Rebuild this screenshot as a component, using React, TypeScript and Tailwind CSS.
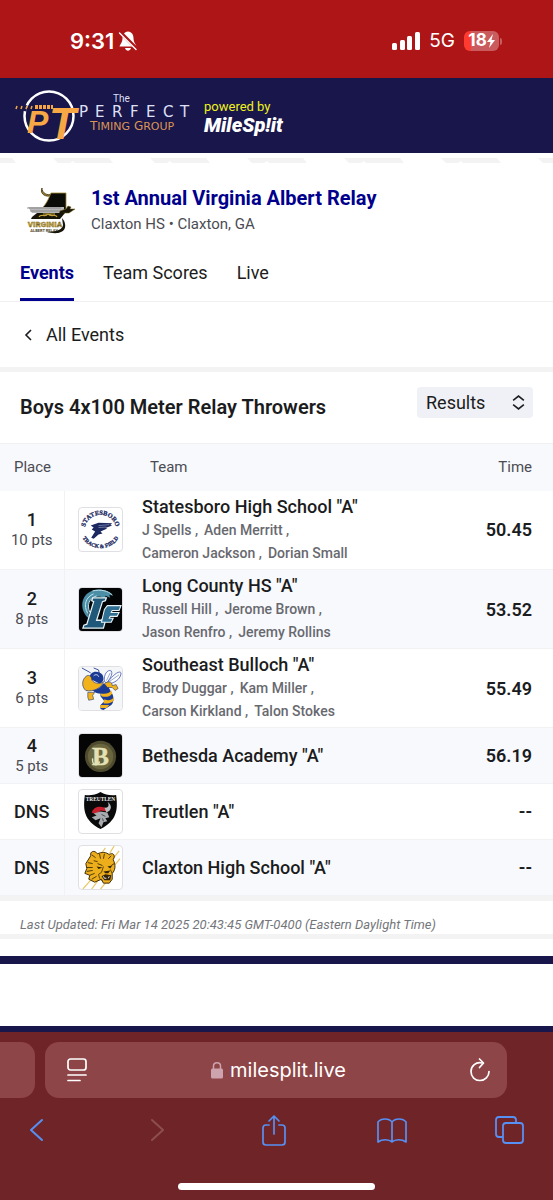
import React, { useState } from 'react';

interface Result {
  place: string;
  points?: string;
  team: string;
  athletes?: string[][];
  time: string;
  logo: React.ReactNode;
}

/* ---------- team logos ---------- */

const StatesboroLogo = () => (
  <svg viewBox="0 0 44 44" className="h-full w-full" aria-hidden="true">
    <defs>
      <path id="arcTop" d="M6 22 A 16 15 0 0 1 38 22" />
      <path id="arcBottom" d="M1 21 A 21 20 0 0 0 43 21" />
    </defs>
    <g fill="#1c2860" stroke="#1c2860" strokeWidth="0.300" fontFamily="Liberation Serif" fontWeight="700" fontSize="6.500" textAnchor="middle">
      <text>
        <textPath href="#arcTop" startOffset="50%">STATESBORO</textPath>
      </text>
      <text fontSize="5.500">
        <textPath href="#arcBottom" startOffset="50%">TRACK &amp; FIELD</textPath>
      </text>
    </g>
    <path d="M12 18 L20 15 L34 15.500 L32 17.500 L34 18 L27 20.500 L29 21 L22 24 L24 26 L20 27 L15 31.500 L12.500 30.500 L16.500 24 L13 22 L15 20 Z" fill="#1c2860" />
    <path d="M20 18 L31 17 M20 20 L28 19.500" stroke="#aab1d0" strokeWidth="0.600" />
  </svg>
);

const LongCountyLogo = () => (
  <svg viewBox="0 0 44 44" className="h-full w-full" aria-hidden="true">
    <rect width="44" height="44" fill="#020406" />
    <path d="M10 31 C1 24 1 9 11 4 C18 0 29 1 35 8 L31 7 L32 10 L27 8 L27 11 L22 9 C13 8 8 13 10 22 Z" fill="#4c8ea6" />
    <path d="M9 26 C4 18 7 9 15 6 M11 25 C8 17 10 11 18 8 M14 3 C22 1 30 3 34 7" stroke="#c4e5ec" strokeWidth="1" fill="none" />
    <path d="M14 10 H28 L27 13 L24 14 L18 33 H23 L26 29 L28 30 L25 41 H4 L5 38 L8 37 L15 14 L13 13 Z" fill="#1f5878" stroke="#e8f3f6" strokeWidth="1.300" />
    <path d="M29 18 H43 L41 23 H34 L33 25 H41 L39 29 H32 L31 31 H35 L33 35 H23 L26 22 Z" fill="#2f6f92" stroke="#e8f3f6" strokeWidth="1.100" />
  </svg>
);

const HornetLogo = () => (
  <svg viewBox="0 0 44 44" className="h-full w-full" aria-hidden="true">
    <rect width="44" height="44" fill="#f5f6f8" />
    <path d="M26 15 C25 8 29 2 33 4 C35 8 31 12 29 16 C34 9 41 3 43 6 C43 12 36 17 30 17 Z" fill="#fff" stroke="#5269b4" strokeWidth="0.900" />
    <path d="M28 14 L32 6 M31 15 L41 8" stroke="#5269b4" strokeWidth="0.600" />
    <path d="M3 1 L12 6 M15 1 L20 3 L21 8" stroke="#243f92" strokeWidth="0.900" fill="none" />
    <path d="M11 12 C10 4 20 3 24 8 C26 12 25 16 21 17 Z" fill="#1b3a93" />
    <path d="M8 9 C2 13 3 21 7 24 C14 26 24 21 25 15 C22 18 15 17 13 13 C13 9 10 8 8 9 Z" fill="#f2b21c" stroke="#29396f" strokeWidth="0.700" />
    <path d="M15 9 C17 7 20 8 20 10" stroke="#fff" strokeWidth="0.800" fill="none" />
    <path d="M14 24 C20 23 23 20 25 17 L31 20 L30 26 C24 28 18 28 14 24 Z" fill="#1b3a93" />
    <path d="M26 17 C30 14 34 15 34 19 L38 18 L40 22 L37 24 L34 21 L29 21 Z" fill="#f2b21c" stroke="#29396f" strokeWidth="0.600" />
    <path d="M9 26 L16 26 L14 29 L15 33 L10 34 L9 31 Z" fill="#f2b21c" stroke="#29396f" strokeWidth="0.600" />
    <path d="M22 25 L31 22 L33 26 C36 29 36 36 33 39 L25 44 L22 43 L22 39 L26 35 L22 30 Z" fill="#1b3a93" />
    <path d="M22 27 C27 28 31 27 33 24 L34 27 C31 31 27 31 23 30 Z M26 33 C30 35 33 34 36 31 L35 35 C32 37 28 38 25 37 Z M22 39 L31 39 L28 42 L22 42 Z" fill="#f2b21c" />
  </svg>
);

const BethesdaLogo = () => (
  <svg viewBox="0 0 44 44" className="h-full w-full" aria-hidden="true">
    <rect width="44" height="44" fill="#050505" />
    <circle cx="22" cy="23" r="16" fill="#4e4b2f" />
    <circle cx="22" cy="23" r="13" fill="#68653f" />
    <text x="22" y="32" textAnchor="middle" fontFamily="Liberation Serif" fontWeight="700" fontSize="26" fill="#e4e0b4" stroke="#e4e0b4" strokeWidth="0.400">B</text>
    <path d="M14 25 C13 33 20 33 21 28" stroke="#e4e0b4" strokeWidth="1.500" fill="none" />
  </svg>
);

const TreutlenLogo = () => (
  <svg viewBox="0 0 44 44" className="h-full w-full" aria-hidden="true">
    <path d="M22 2 C27 5 33 6 38 5 C40 20 39 31 22 40 C5 31 4 20 6 5 C11 6 17 5 22 2 Z" fill="#0a0a0a" />
    <text x="22" y="11" textAnchor="middle" fontFamily="Liberation Serif" fontWeight="700" fontSize="5.500" fill="#f2f2f2">TREUTLEN</text>
    <path d="M13 23 C15 17 21 16 26 18 L29 22 L22 21 L18 25 Z" fill="#c9202f" />
    <path d="M26 18 C31 19 31 14 29 12 C34 15 34 21 28 23 Z" fill="#b9bcc0" />
    <path d="M15 24 L22 22 L29 23 L31 28 L27 29 L29 32 L25 33 L23 38 L20 34 L22 29 L17 31 L13 28 L18 26 Z" fill="#a7aaaf" />
    <path d="M23 25 L27 27 M24 29 L25 32" stroke="#333" strokeWidth="0.800" />
  </svg>
);

const TigerLogo = () => (
  <svg viewBox="0 0 44 44" className="h-full w-full" aria-hidden="true">
    <path d="M22 9 L27 2 M31 8 L36 0 M35 13 L41 5 M37 19 L42 13 M4 44 L12 35 M13 44 L19 36 M22 44 L27 38" stroke="#e8c762" strokeWidth="1.200" />
    <path d="M12 10 C11 5 16 4 19 8 C23 6 28 6 31 9 C34 6 38 9 35 14 C38 20 37 25 34 28 L34 34 L31 38 L25 38 L23 34 L16 37 L10 34 L11 30 L6 28 L8 23 L7 18 Z" fill="#ecae1a" stroke="#3d2c0a" strokeWidth="1" />
    <path d="M13 9 L17 12 M21 8 L22 13 M26 8 L25 13 M33 10 L30 13 M9 17 L14 18 M8 22 L14 22 M8 26 L14 25 M11 30 L16 28 M13 34 L18 31 M15 15 L19 16 M36 18 L33 20 M19 18 L24 20" stroke="#3d2c0a" strokeWidth="0.900" fill="none" />
    <path d="M18 21 L24 22 L20 23.500 Z M29 21 L34 20 L32 23 Z M25 26 L32 25 L30 28 L27 28 Z M23 31 L27 29 L33 30 L32 35 L26 35 Z" fill="#33240a" />
    <path d="M25 21 L23 27 L20 29 L21 33 L24 36 M32 24 L34 28" stroke="#3d2c0a" strokeWidth="0.800" fill="none" />
    <path d="M25 31 L26 33 L28 33 M31 31 L30 33" stroke="#fff" strokeWidth="0.900" fill="none" />
  </svg>
);

const MeetLogo = () => (
  <svg viewBox="0 0 48 48" className="size-12 shrink-0" aria-hidden="true">
    <path d="M25 8 C20 10 15 7 15 2 C13 6 16 11 23 10" fill="#9d8429" stroke="#3b3010" strokeWidth="0.800" />
    <path d="M24 7 H39 V24 H13 C19 19 21 14 24 7 Z" fill="#0b0b08" stroke="#a58b2e" strokeWidth="0.800" />
    <path d="M1 21 H37 V27 H5 Z" fill="#b8b8b8" />
    <path d="M0 22 H34 M3 25 H36" stroke="#808080" strokeWidth="0.800" />
    <path d="M33 25 L39 23 L41 20 L44 21 L43 23 L48 23 L42 27 L36 27 L31 31 Z" fill="#171408" stroke="#76611b" strokeWidth="0.500" />
    <path d="M5 31 L10 27 L38 27 L33 33 H4 Z" fill="#171408" />
    <path d="M12 31 C14 27 18 32 21 28 C25 32 28 27 30 31 M16 28 H28" stroke="#c6a43b" strokeWidth="1.200" fill="none" />
    <text x="18" y="41" textAnchor="middle" fontFamily="Roboto" fontWeight="900" fontSize="8" fill="#c6a43b" stroke="#6d581c" strokeWidth="0.300">VIRGINIA</text>
    <text x="17" y="46" textAnchor="middle" fontFamily="Roboto" fontWeight="700" fontSize="4" fill="#4d4325">ALBERT RELAY</text>
    <path d="M35 32 C39 36 40 44 34 46 C30 48 24 47 20 46 C30 46 36 43 36 39 Z" fill="#171408" />
  </svg>
);

const results: Result[] = [
  {
    place: '1',
    points: '10 pts',
    team: 'Statesboro High School "A"',
    athletes: [['J Spells', 'Aden Merritt'], ['Cameron Jackson', 'Dorian Small']],
    time: '50.45',
    logo: <StatesboroLogo />,
  },
  {
    place: '2',
    points: '8 pts',
    team: 'Long County HS "A"',
    athletes: [['Russell Hill', 'Jerome Brown'], ['Jason Renfro', 'Jeremy Rollins']],
    time: '53.52',
    logo: <LongCountyLogo />,
  },
  {
    place: '3',
    points: '6 pts',
    team: 'Southeast Bulloch "A"',
    athletes: [['Brody Duggar', 'Kam Miller'], ['Carson Kirkland', 'Talon Stokes']],
    time: '55.49',
    logo: <HornetLogo />,
  },
  { place: '4', points: '5 pts', team: 'Bethesda Academy "A"', time: '56.19', logo: <BethesdaLogo /> },
  { place: 'DNS', team: 'Treutlen "A"', time: '--', logo: <TreutlenLogo /> },
  { place: 'DNS', team: 'Claxton High School "A"', time: '--', logo: <TigerLogo /> },
];

/* ---------- phone status bar ---------- */

const StatusBar = () => (
  <div className="flex h-[78px] items-center justify-between bg-[#ad1517] pr-[51px] pl-[70px] pt-1 font-['Inter'] text-white">
    <div className="flex items-center gap-1">
      <span className="text-[22px] font-semibold">9:31</span>
      <svg viewBox="0 0 20 20" className="size-5" aria-hidden="true">
        <path d="M10 0.500 C6 1 4.500 4 4.500 7 C4.500 11 3 12 1.500 15.500 H18.500 C17 12 15.500 11 15.500 7 C15.500 4 14 1 10 0.500 Z M7 17 H13 C12 20.500 8 20.500 7 17 Z" fill="#fff" />
        <path d="M2 1 L19 18" stroke="#ad1517" strokeWidth="3.500" />
        <path d="M1.500 2 L18 18.500" stroke="#fff" strokeWidth="1.400" strokeLinecap="round" />
      </svg>
    </div>
    <div className="flex items-center gap-[9px]">
      <svg viewBox="0 0 28 18" className="h-[18px] w-7" fill="#fff" aria-hidden="true">
        <rect x="0" y="11" width="5" height="7" rx="1.500" />
        <rect x="8" y="8" width="5" height="10" rx="1.500" />
        <rect x="15" y="4" width="5" height="14" rx="1.500" />
        <rect x="23" y="0" width="5" height="18" rx="1.500" />
      </svg>
      <span className="text-[19px]">5G</span>
      <div className="flex items-center">
        <div className="flex h-5 w-[35px] items-center justify-center rounded-md bg-linear-to-r from-[#ff3b30] from-20% to-[#c95c5e] to-20% text-[17px] font-bold">
          18
          <svg viewBox="0 0 8 14" className="h-[14px] w-2" fill="#fff" aria-hidden="true">
            <path d="M6 0 L0 8 H3.500 L2 14 L8 6 H4.500 Z" />
          </svg>
        </div>
        <span className="ml-px h-[7px] w-[2px] rounded-r bg-[#c95c5e]" />
      </div>
    </div>
  </div>
);

/* ---------- sponsor header ---------- */

const BrandHeader = () => (
  <header className="flex h-[75px] items-center gap-3 bg-[#18164a] pl-[15px]">
    <svg viewBox="0 0 177 58" className="h-[58px] w-[177px] overflow-visible" role="img" aria-label="The Perfect Timing Group">
      <circle cx="34" cy="29" r="24.500" fill="none" stroke="#fff" strokeWidth="2.500" />
      <path d="M10 18 L9 24" stroke="#18164a" strokeWidth="5" />
      <path d="M2 19 L1 22 M7 19 L6 22 M12 19 L11 22 M17 19 L16 22" stroke="#f7a844" strokeWidth="1.500" />
      <path d="M20 20 H38" stroke="#f7a844" strokeWidth="4" strokeDasharray="3 1" />
      <g fontFamily="Liberation Sans" fontStyle="italic" fontWeight="700" fill="#f7a844">
        <text x="12" y="46" fontSize="32">P</text>
        <text x="34" y="52" fontSize="44">T</text>
      </g>
      <text x="98" y="15" fontFamily="Roboto" fontSize="10" fill="#dddff5">The</text>
      <g fontFamily="DejaVu Sans">
        <text y="30" fontSize="15" fill="#dfe0f7">
          <tspan x="64">P</tspan><tspan x="80">E</tspan><tspan x="97">R</tspan><tspan x="115">F</tspan>
          <tspan x="131">E</tspan><tspan x="148">C</tspan><tspan x="165">T</tspan>
        </text>
        <text x="75" y="43" fontSize="12" fill="#dc9455">T<tspan fontSize="11">IMING</tspan> G<tspan fontSize="11">ROUP</tspan></text>
      </g>
    </svg>
    <a href="#milesplit" className="flex flex-col pt-[3px]">
      <span className="text-[13px] leading-4 text-[#f1f21b]">powered by</span>
      <span className="text-[20px] leading-5 font-black text-white italic">MileSp!it</span>
    </a>
  </header>
);

/* ---------- browser chrome ---------- */

const navButton = 'flex w-[30px] justify-center';

const BrowserBar = () => (
  <footer className="bg-[#6f2427] pt-[10px] font-['Inter']">
    <div className="flex h-14 items-stretch gap-[10px]">
      <div className="w-[35px] rounded-r-[14px] bg-[#8e4547]" />
      <div className="flex flex-1 items-center justify-between rounded-[14px] bg-[#8e4547] pr-4 pl-[21px] text-white">
        <button type="button" aria-label="Page settings">
          <svg viewBox="0 0 22 26" className="h-[26px] w-[22px]" fill="none" stroke="#fff" strokeWidth="1.700" strokeLinecap="round" aria-hidden="true">
            <rect x="2" y="2" width="18" height="11" rx="2.500" />
            <path d="M2 18 H20 M2 23.500 H14" />
          </svg>
        </button>
        <div className="flex items-center gap-[7px] text-[20px]">
          <svg viewBox="0 0 12 18" className="h-[18px] w-3" aria-hidden="true">
            <rect x="0" y="7.500" width="12" height="10" rx="1.500" fill="#cda3ad" />
            <path d="M2.500 8 V5 C2.500 0.500 9.500 0.500 9.500 5 V8" fill="none" stroke="#cda3ad" strokeWidth="1.500" />
          </svg>
          <span>milesplit.live</span>
        </div>
        <button type="button" aria-label="Reload">
          <svg viewBox="0 0 22 26" className="h-[26px] w-[22px]" fill="none" stroke="#fff" strokeWidth="1.700" strokeLinecap="round" strokeLinejoin="round" aria-hidden="true">
            <path d="M13 6 C7 4.500 2 9 2 14.500 C2 20 6 23.500 11 23.500 C16 23.500 20 19.500 20 14.500" />
            <path d="M10.500 2 L14.500 6 L10.500 10.500" />
          </svg>
        </button>
      </div>
      <div className="w-9" />
    </div>
    <nav className="flex h-16 items-center justify-between pr-7 pl-[22px]" aria-label="Browser">
      <button type="button" aria-label="Back" className={navButton}>
        <svg viewBox="0 0 18 24" className="h-6 w-[18px]" fill="none" stroke="#5790f5" strokeWidth="2" strokeLinecap="round" strokeLinejoin="round"><path d="M14 2 L3 12 L14 22" /></svg>
      </button>
      <button type="button" aria-label="Forward" className={navButton}>
        <svg viewBox="0 0 18 24" className="h-6 w-[18px]" fill="none" stroke="#8d4e50" strokeWidth="2" strokeLinecap="round" strokeLinejoin="round"><path d="M6 2 L17 12 L6 22" /></svg>
      </button>
      <button type="button" aria-label="Share" className={navButton}>
        <svg viewBox="0 0 26 32" className="h-8 w-[26px]" fill="none" stroke="#5790f5" strokeWidth="1.700" strokeLinecap="round" strokeLinejoin="round">
          <path d="M8 11 H5 C3 11 2 12 2 14 V28 C2 30 3 31 5 31 H21 C23 31 24 30 24 28 V14 C24 12 23 11 21 11 H18 M13 20 V2 M8 7 L13 2 L18 7" />
        </svg>
      </button>
      <button type="button" aria-label="Bookmarks" className={navButton}>
        <svg viewBox="0 0 32 28" className="h-7 w-8 shrink-0" fill="none" stroke="#5790f5" strokeWidth="1.700" strokeLinejoin="round">
          <path d="M16 26 C13 23 6 23 2 26 V6 C5 2 13 2 16 6 C19 2 27 2 30 6 V26 C26 23 19 23 16 26 Z M16 6 V26" />
        </svg>
      </button>
      <button type="button" aria-label="Tabs" className={navButton}>
        <svg viewBox="0 0 30 30" className="size-[30px]" fill="none" stroke="#5790f5" strokeWidth="1.800" strokeLinecap="round" strokeLinejoin="round">
          <rect x="8" y="8" width="20" height="20" rx="3" />
          <path d="M7 22 H4 C2 22 1 21 1 19 V5 C1 3 2 2 4 2 H18 C20 2 21 3 21 5 V7" />
        </svg>
      </button>
    </nav>
    <div className="flex h-[38px] items-end justify-center pb-[10px]">
      <div className="h-[7px] w-[197px] rounded-full bg-white" />
    </div>
  </footer>
);

const App: React.FC = () => {
  const [view, setView] = useState('Results');

  return (
    <div className="min-h-screen bg-white font-['Roboto',sans-serif] text-[#1b1c20]">
      <StatusBar />
      <BrandHeader />

      {/* pattern strip under the header */}
      <svg className="mt-[5px] block h-[5px] w-full" aria-hidden="true">
        <defs>
          <pattern id="strip" width="97" height="5" patternUnits="userSpaceOnUse" x="53">
            <path d="M0 0 H56 L60 5 H22 L20 3 L17 5 H5 Z" fill="#f3f3f4" />
          </pattern>
        </defs>
        <rect width="100%" height="5" fill="url(#strip)" />
      </svg>

      <section className="flex items-center gap-4 pt-[21px] pl-[27px]">
        <MeetLogo />
        <div>
          <h1 className="text-[20px] leading-7 font-bold text-[#00008c]">1st Annual Virginia Albert Relay</h1>
          <p className="text-[15px] leading-6 text-[#4b4c53]">Claxton HS • Claxton, GA</p>
        </div>
      </section>

      <nav className="mt-[5px] flex h-[61px] gap-[29px] border-b border-[#f0f0f2] pl-5 text-[18px]" aria-label="Meet">
        <a href="#events" className="border-b-3 border-[#00008c] pt-5 leading-6 font-bold text-[#00008c]">Events</a>
        <a href="#scores" className="pt-5 leading-6">Team Scores</a>
        <a href="#live" className="pt-5 leading-6">Live</a>
      </nav>

      <a href="#all" className="flex h-[70px] items-center gap-[14px] border-b-5 border-[#f3f3f4] pl-6 text-[18px]">
        <svg viewBox="0 0 8 12" className="h-3 w-2" fill="none" stroke="#1b1c20" strokeWidth="1.600" aria-hidden="true"><path d="M7 1 L2 6 L7 11" /></svg>
        All Events
      </a>

      <div className="flex h-[71px] items-start justify-between pt-[15px] pr-5 pl-5">
        <h2 className="pt-[6px] text-[20px] leading-7 font-semibold">Boys 4x100 Meter Relay Throwers</h2>
        <div className="relative">
          <select
            aria-label="View"
            value={view}
            onChange={(e) => setView(e.target.value)}
            className="h-[31px] w-[116px] appearance-none rounded-sm bg-[#f0f0f7] pl-[9px] text-[18px]"
          >
            <option>Results</option>
            <option>Entries</option>
          </select>
          <svg viewBox="0 0 12 14" className="pointer-events-none absolute top-2 right-2 h-[15px] w-[13px]" fill="none" stroke="#1b1c20" strokeWidth="1.500" aria-hidden="true">
            <path d="M1 5 L6 1 L11 5 M1 9 L6 13 L11 9" />
          </svg>
        </div>
      </div>

      <table className="w-full border-collapse text-left">
        <thead>
          <tr className="h-[47px] border-t border-[#f0f0f2] bg-[#f8f9fd] text-[15px] text-[#4b4c53]">
            <th className="w-16 pl-[14px] font-normal">Place</th>
            <th colSpan={2} className="pl-[86px] font-normal">Team</th>
            <th className="pr-[21px] text-right font-normal">Time</th>
          </tr>
        </thead>
        <tbody>
          {results.map((r) => (
            <tr
              key={r.team}
              className={`border-b border-[#f2f2f5] even:bg-[#f8f9fd] ${r.athletes ? 'h-[79px]' : 'h-14'}`}
            >
              <td className="w-16 border-r border-[#f2f2f5] text-center">
                <div className="text-[18px] leading-[21px] font-medium">{r.place}</div>
                {r.points && <div className="text-[15px] leading-[21px] text-[#4b4c53]">{r.points}</div>}
              </td>
              <td className="w-[78px] pl-[13px]">
                <div className="size-[45px] overflow-hidden rounded-[4px] border border-[#e0e0e4] bg-white">{r.logo}</div>
              </td>
              <td>
                <div className="text-[18px] leading-6 font-medium">{r.team}</div>
                {r.athletes?.map(([first, second], i) => (
                  <div key={first} className="flex gap-[6px] text-[14px] leading-[23px] font-medium text-[#68696f]">
                    <span>{first} ,</span>
                    <span>{second}{i === 0 && ' ,'}</span>
                  </div>
                ))}
              </td>
              <td className="pr-[21px] text-right text-[18px] font-semibold">{r.time}</td>
            </tr>
          ))}
        </tbody>
      </table>

      <p className="border-t-5 border-b-5 border-[#f3f3f4] pt-[14px] pl-5 text-[13px] leading-[19px] text-[#74767b] italic">
        Last Updated: Fri Mar 14 2025 20:43:45 GMT-0400 (Eastern Daylight Time)
      </p>

      <div className="mt-[17px] h-[76px] border-t-8 border-b-6 border-[#18164a] bg-white" />

      <BrowserBar />
    </div>
  );
};

export default App;
